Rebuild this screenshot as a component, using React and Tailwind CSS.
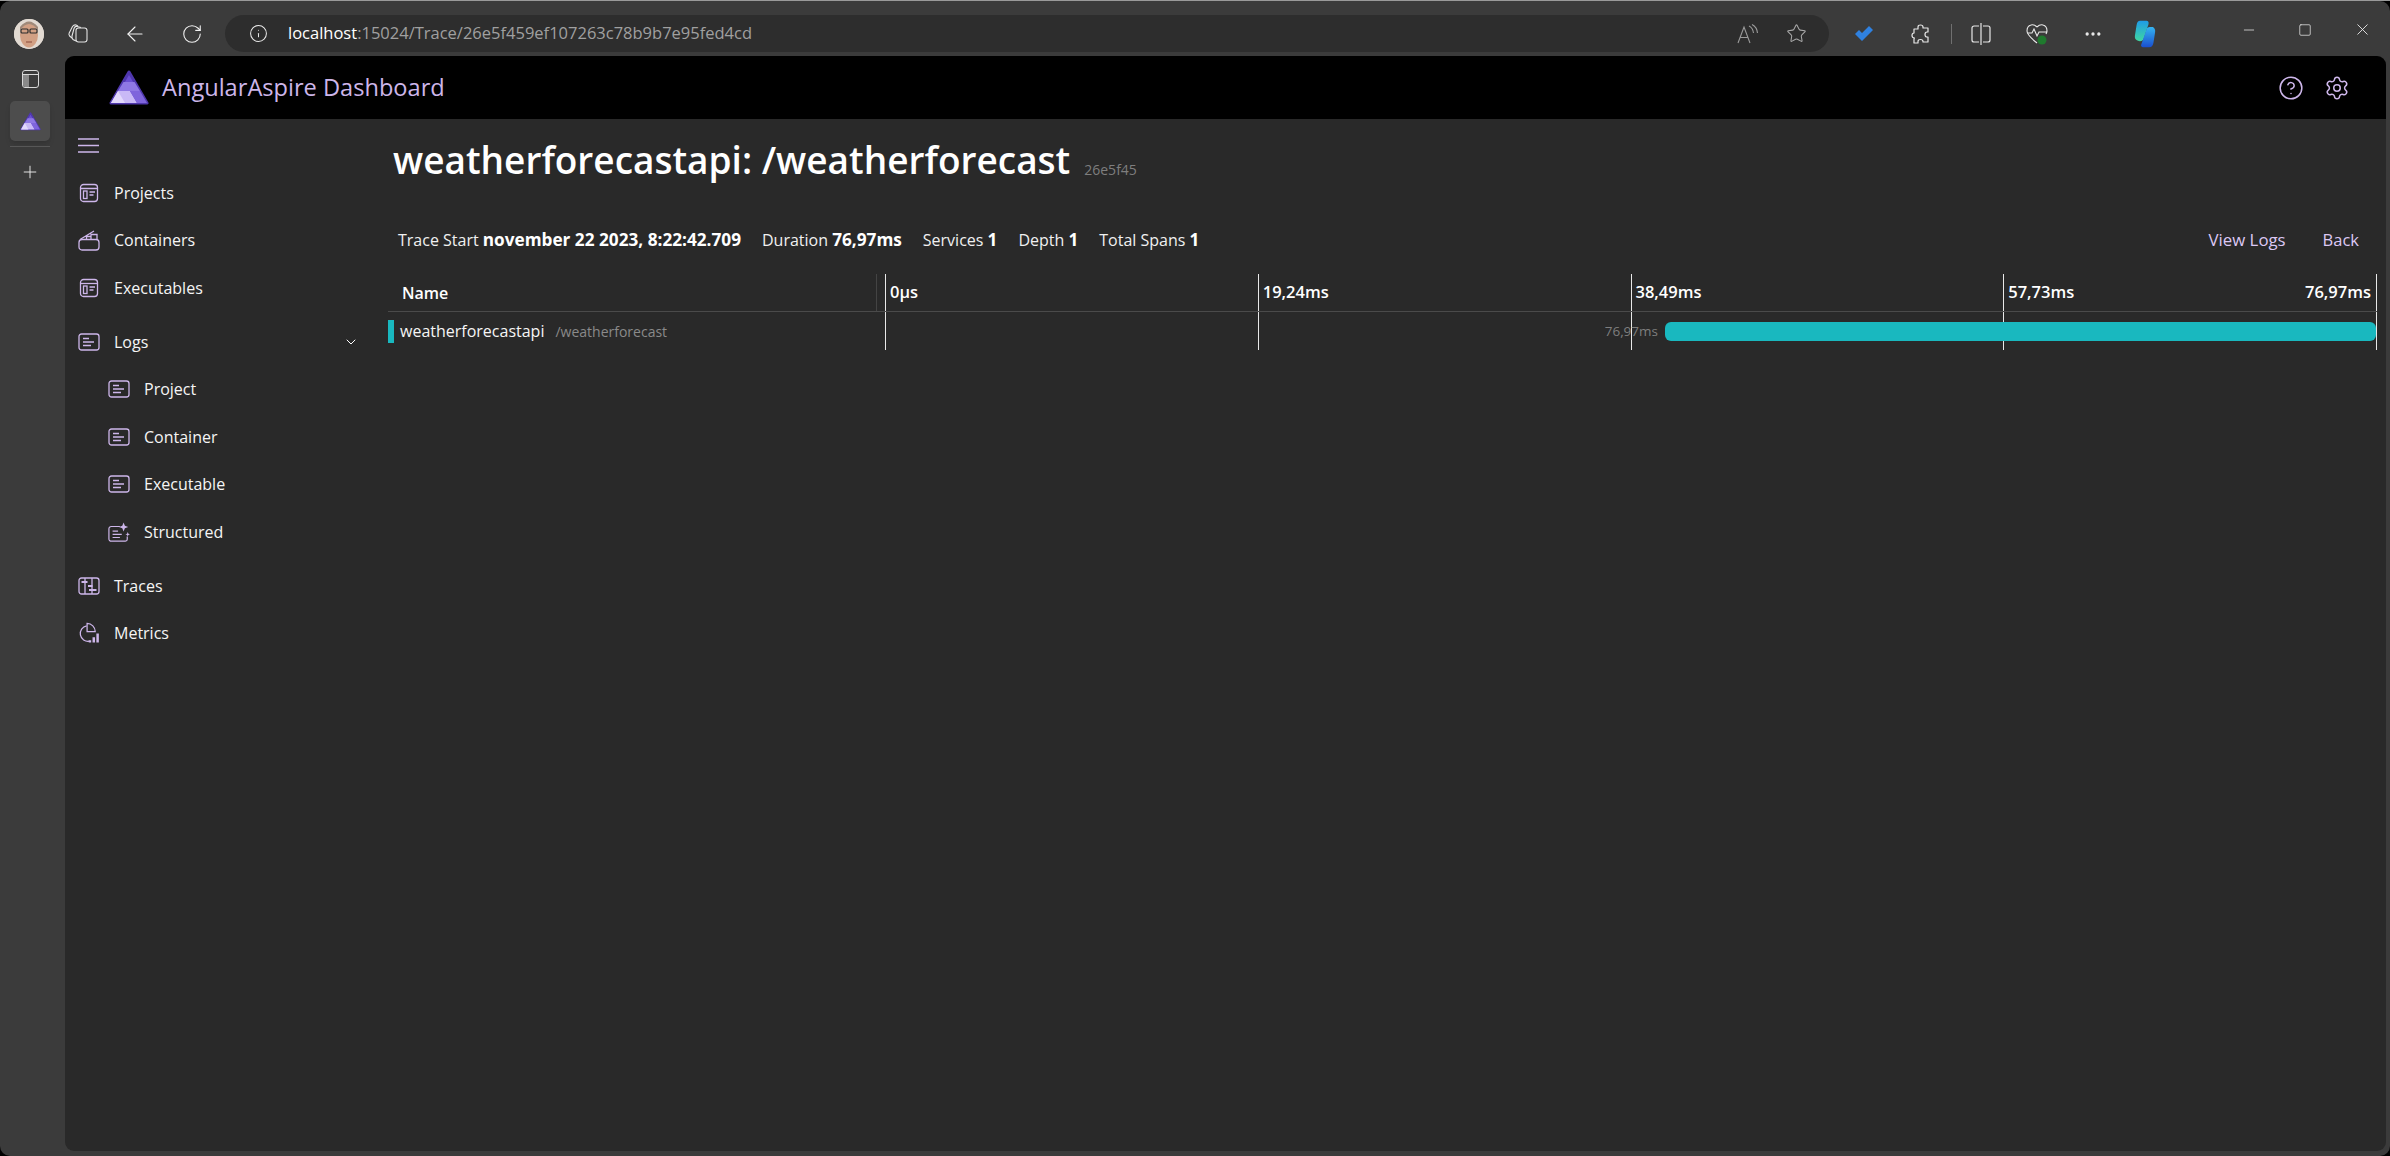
import { ArrowLeft, ChevronDown, CircleHelp, Info, Minus, MoreHorizontal, Plus, RotateCw, Settings, Square, Star, X } from "lucide-react";

const lilac = "#cdb6ea";

function Logo({ className }) {
  return (
    <svg viewBox="0 0 40 36" className={className}>
      <path d="M20 2 L38 33 H2 Z" fill="#6a4fd2" stroke="#4f37ad" strokeWidth="3" strokeLinejoin="round" />
      <path d="M14.5 12 H25.5 L31 21 H9 Z" fill="#8f78e4" />
      <path d="M9 21 H21 L28 33 H2 Z" fill="#c9b9f6" />
      <path d="M9 21 L16 33 H2 Z" fill="#e2d8fc" />
      <path d="M21 21 H31 L38 33 H28 Z" fill="#7f65dc" />
    </svg>
  );
}

function CardIcon() {
  return (
    <svg viewBox="0 0 20 20" className="h-[20px] w-[20px]" fill="none" stroke={lilac} strokeWidth="1.3">
      <rect x="1.5" y="1.5" width="17" height="17" rx="3" />
      <path d="M1.5 5.5 H18.5" />
      <rect x="4.5" y="8" width="3.5" height="7.5" />
      <path d="M10.5 9 H16 M10.5 12 H14.5" />
    </svg>
  );
}

function ContainerIcon() {
  return (
    <svg viewBox="0 0 22 21" className="h-[21px] w-[22px]" fill="none" stroke={lilac} strokeWidth="1.3">
      <rect x="1" y="9.5" width="20" height="10.5" rx="3" />
      <path d="M2 9.5 L16 1 M8.5 9.5 V6.5 H13 V9.5 M13 6 V4.5 H19 V9.5" />
    </svg>
  );
}

function LogIcon() {
  return (
    <svg viewBox="0 0 22 18" className="h-[18px] w-[22px]" fill="none" stroke={lilac} strokeWidth="1.3">
      <rect x="1" y="1" width="20" height="16" rx="2.5" />
      <path d="M5 5.5 H11 M5 9 H16 M5 12.5 H13" />
    </svg>
  );
}

function StructuredIcon() {
  return (
    <svg viewBox="0 0 24 22" className="h-[22px] w-[24px]" fill="none" stroke={lilac} strokeWidth="1.3">
      <path d="M13 5 H3.5 A2.5 2.5 0 0 0 1 7.5 V18.5 A2.5 2.5 0 0 0 3.5 21 H19 A2 2 0 0 0 21 19 V16" />
      <path d="M5 10 H11 M5 13.5 H15 M5 17 H13" />
      <path d="M17 0.5 L18.4 4.1 L22 5.5 L18.4 6.9 L17 10.5 L15.6 6.9 L12 5.5 L15.6 4.1 Z" fill={lilac} stroke="none" />
      <path d="M21.5 11 L22.2 12.8 L24 13.5 L22.2 14.2 L21.5 16 L20.8 14.2 L19 13.5 L20.8 12.8 Z" fill={lilac} stroke="none" />
    </svg>
  );
}

function TraceIcon() {
  return (
    <svg viewBox="0 0 22 18" className="h-[18px] w-[22px]" fill="none" stroke={lilac} strokeWidth="1.3">
      <rect x="1" y="1" width="20" height="16" rx="2.5" />
      <path d="M7 1 V17 M14 1 V17" />
      <path d="M3.5 5 H9.5 M10 9 H14.5 M11 13 H18.5" strokeWidth="2" />
    </svg>
  );
}

function MetricIcon() {
  return (
    <svg viewBox="0 0 23 22" className="h-[22px] w-[23px]" fill="none" stroke={lilac} strokeWidth="1.3">
      <path d="M9 3.5 A8 8 0 1 0 12 19.5" />
      <path d="M9.5 1 A8.5 8.5 0 0 1 18 9.5 H9.5 Z" />
      <path d="M12.5 18.5 V21 M16.5 15.5 V21 M20.5 11.5 V21" strokeWidth="2.6" />
    </svg>
  );
}

function Hamburger() {
  return (
    <svg viewBox="0 0 21 15" className="h-[15px] w-[21px]" stroke={lilac} strokeWidth="1.3">
      <path d="M0 1 H21 M0 7.5 H21 M0 14 H21" />
    </svg>
  );
}

function NavRow({ icon, label, sub, chevron }) {
  return (
    <div className={`flex h-[47.5px] items-center ${sub ? "pl-[43px]" : "pl-[13px]"}`}>
      <div className="flex w-[22px] shrink-0 justify-center">{icon}</div>
      <span className="ml-[14px] text-[16px] text-[#f5f5f5]">{label}</span>
      {chevron && <ChevronDown size={16} strokeWidth={1.5} className="ml-auto mr-[26px] text-white" />}
    </div>
  );
}

function Sidebar() {
  return (
    <nav className="flex w-[320px] shrink-0 flex-col pt-[2px]">
      <div className="flex h-[48px] items-center pl-[13px]">
        <Hamburger />
      </div>
      <NavRow icon={<CardIcon />} label="Projects" />
      <NavRow icon={<ContainerIcon />} label="Containers" />
      <NavRow icon={<CardIcon />} label="Executables" />
      <div className="mt-[6.5px]">
        <NavRow icon={<LogIcon />} label="Logs" chevron />
        <NavRow icon={<LogIcon />} label="Project" sub />
        <NavRow icon={<LogIcon />} label="Container" sub />
        <NavRow icon={<LogIcon />} label="Executable" sub />
        <NavRow icon={<StructuredIcon />} label="Structured" sub />
      </div>
      <div className="mt-[6.5px]">
        <NavRow icon={<TraceIcon />} label="Traces" />
        <NavRow icon={<MetricIcon />} label="Metrics" />
      </div>
    </nav>
  );
}

function Stat({ label, value, className }) {
  return (
    <span className={`text-[16px] text-[#f0f0f0] ${className}`}>
      {label} <b className="text-[17.2px] font-bold text-white">{value}</b>
    </span>
  );
}

const ticks = ["0µs", "19,24ms", "38,49ms", "57,73ms"];

function TraceTable() {
  return (
    <div className="mt-[22px] mr-[9px]">
      <div className="flex h-[38px] border-b border-[#4a4a4a] ml-[3px]">
        <div className="relative flex w-[497px] shrink-0 items-center pl-[14px] text-[16px] font-semibold text-white">
          Name
          <div className="absolute right-[8px] top-0 h-full border-r border-[#444]" />
        </div>
        <div className="grid flex-1 grid-cols-4 border-r border-[#e8e8e8]">
          {ticks.map((t) => (
            <div key={t} className="flex items-center justify-between border-l border-[#e8e8e8] px-[4px] text-[16.5px] font-semibold text-white">
              <span>{t}</span>
              {t === "57,73ms" && <span className="pr-[1px]">76,97ms</span>}
            </div>
          ))}
        </div>
      </div>
      <div className="flex h-[38px] ml-[3px]">
        <div className="flex w-[497px] shrink-0 items-center">
          <div className="h-[23px] w-[6px] bg-[#19b8bf]" />
          <span className="ml-[6px] text-[16px] text-[#f5f5f5]">weatherforecastapi</span>
          <span className="ml-[11px] text-[14px] text-[#8a8a8a]">/weatherforecast</span>
        </div>
        <div className="relative grid flex-1 grid-cols-4 border-r border-[#e8e8e8]">
          {ticks.map((t) => (
            <div key={t} className="border-l border-[#e8e8e8]" />
          ))}
          <div className="absolute inset-y-0 right-0 flex items-center gap-[7px]">
            <span className="text-[13.5px] text-[#7e7e7e]">76,97ms</span>
            <div className="h-[19px] w-[711px] rounded-[6px] bg-[#19b8bf]" />
          </div>
        </div>
      </div>
    </div>
  );
}

function TraceDetail() {
  return (
    <main className="flex min-w-0 flex-1 flex-col pt-[14px]">
      <div className="flex h-[54px] items-center pl-[8px]">
        <h1 className="text-[37px] font-semibold text-white">weatherforecastapi: /weatherforecast</h1>
        <span className="ml-[14px] mt-[18px] text-[14px] text-[#7e7e7e]">26e5f45</span>
      </div>
      <div className="mt-[41px] flex h-[24px] items-center pl-[13px] pr-[27px]">
        <Stat label="Trace Start" value="november 22 2023, 8:22:42.709" />
        <Stat label="Duration" value="76,97ms" className="ml-[21px]" />
        <Stat label="Services" value="1" className="ml-[21px]" />
        <Stat label="Depth" value="1" className="ml-[21px]" />
        <Stat label="Total Spans" value="1" className="ml-[21px]" />
        <span className="ml-auto text-[16.8px] text-[#dcc8f4]">View Logs</span>
        <span className="ml-[37px] text-[16.5px] text-[#dcc8f4]">Back</span>
      </div>
      <TraceTable />
    </main>
  );
}

function Avatar() {
  return (
    <div className="flex h-[30px] w-[30px] items-center justify-center overflow-hidden rounded-full bg-[#d9d2cc]">
      <svg viewBox="0 0 30 30" className="h-full w-full">
        <rect width="30" height="30" fill="#e2dad2" />
        <ellipse cx="15" cy="16" rx="9" ry="12.5" fill="#d2a084" />
        <path d="M6 11 Q15 -1 24 11 L24 8 Q15 -3 6 8 Z" fill="#a08a7a" />
        <rect x="7" y="10" width="7" height="4" rx="1" fill="none" stroke="#2c2c2c" strokeWidth="1.2" />
        <rect x="16" y="10" width="7" height="4" rx="1" fill="none" stroke="#2c2c2c" strokeWidth="1.2" />
        <path d="M12 23 H18" stroke="#8a4a3a" strokeWidth="1" />
      </svg>
    </div>
  );
}

function Workspaces() {
  return (
    <svg viewBox="0 0 22 22" className="h-[22px] w-[22px]" fill="none" stroke="#e4e4e4" strokeWidth="1.1">
      <rect x="9" y="5" width="11" height="14" rx="2.5" />
      <path d="M9 18 L6 16.5 Q4.5 15 5 13 L7 5.5 Q8 3 10 3.5 L14 4.5" />
      <path d="M5 15 L2.6 13 Q1.5 11.5 2.2 10 L5.5 3.5 Q7 1.5 9 2 L11 3" />
    </svg>
  );
}

function ReadAloud() {
  return (
    <svg viewBox="0 0 22 20" className="h-[20px] w-[22px]" fill="none" stroke="#9a9a9a" strokeWidth="1.1">
      <path d="M1 19 L7 3 L13 19 M3.2 13.5 H10.8" />
      <path d="M12 2 Q16 4 16.5 9 M15 0.5 Q20 3 20.5 9" />
    </svg>
  );
}

function Todo() {
  return (
    <svg viewBox="0 0 20 18" className="h-[18px] w-[20px]">
      <path d="M1 9 L5 5 L8 8 L15 1 L19 5 L8 16 Z" fill="#2f81e0" />
    </svg>
  );
}

function Extensions() {
  return (
    <svg viewBox="0 0 20 20" className="h-[20px] w-[20px]" fill="none" stroke="#e8e8e8" strokeWidth="1.2" strokeLinejoin="round">
      <path d="M7 3 Q7 1 9.5 1 Q12 1 12 3 V4 H17 V8 H16 Q14 8 14 10.5 Q14 13 16 13 H17 V18 H12 V17.5 Q12 15.5 9.5 15.5 Q7 15.5 7 17.5 V19 H3 V14 H3.5 Q1 14 1 11.5 Q1 9 3 9 V5 H7 Z" />
    </svg>
  );
}

function SplitScreen() {
  return (
    <svg viewBox="0 0 20 22" className="h-[22px] w-[20px]" fill="none" stroke="#e8e8e8" strokeWidth="1.2">
      <path d="M8 3 H3 A2 2 0 0 0 1 5 V17 A2 2 0 0 0 3 19 H8 M12 3 H17 A2 2 0 0 1 19 5 V17 A2 2 0 0 1 17 19 H12" />
      <path d="M10 0 V22" />
    </svg>
  );
}

function Health() {
  return (
    <svg viewBox="0 0 22 22" className="h-[22px] w-[22px]" fill="none" stroke="#e8e8e8" strokeWidth="1.1">
      <path d="M11 4 Q8 1 5 2 Q1 3 1 8 Q1 12 11 20" />
      <path d="M11 4 Q14 1 17 2 Q21 3 21 8 Q21 9 20 11" />
      <path d="M1.5 10 H6 L8 6 L11 13 L13 9 H21" />
      <circle cx="16" cy="17" r="4.5" fill="#1f7a2e" stroke="none" />
    </svg>
  );
}

function Copilot() {
  return (
    <svg viewBox="0 0 30 40" className="h-[28px] w-[30px]">
      <defs>
        <linearGradient id="copA" x1="0" y1="0" x2="0" y2="1">
          <stop offset="0" stopColor="#1f9be8" />
          <stop offset="1" stopColor="#3fd6a0" />
        </linearGradient>
        <linearGradient id="copB" x1="0" y1="0" x2="0" y2="1">
          <stop offset="0" stopColor="#35b4f0" />
          <stop offset="1" stopColor="#1a4fd0" />
        </linearGradient>
      </defs>
      <path d="M8 1 H17 Q21 1 20 6 L13 27 Q11 31 6 30 Q0 29 0.5 23 L3 7 Q4 1 8 1 Z" fill="url(#copA)" />
      <path d="M22 10 H26 Q30 12 29.5 17 L27 33 Q26 39 21 39 H12 Q8 38 10 34 L17 14 Q18 10 22 10 Z" fill="url(#copB)" />
    </svg>
  );
}

function AddressBar() {
  return (
    <div className="ml-[22px] flex h-[37px] w-[1604px] shrink-0 items-center rounded-full bg-[#2d2d2d] pl-[24px] pr-[22px]">
      <Info size={19} strokeWidth={1.3} className="text-[#e8e8e8]" />
      <span className="ml-[20px] text-[16.5px] text-white">
        localhost<span className="text-[#a0a0a0]">:15024/Trace/26e5f459ef107263c78b9b7e95fed4cd</span>
      </span>
      <div className="ml-auto flex items-center gap-[27px]">
        <ReadAloud />
        <Star size={21} strokeWidth={1.2} className="text-[#a8a8a8]" />
      </div>
    </div>
  );
}

function BrowserBar() {
  return (
    <header className="flex h-[55px] shrink-0 items-center pl-[14px] pt-[10px]">
      <Avatar />
      <div className="ml-[23px] flex items-center gap-[34px]">
        <Workspaces />
        <ArrowLeft size={24} strokeWidth={1.1} className="text-[#f0f0f0]" />
        <RotateCw size={22} strokeWidth={1.2} className="text-[#f0f0f0]" />
      </div>
      <AddressBar />
      <div className="ml-[25px] flex w-[20px] justify-center"><Todo /></div>
      <div className="ml-[37px] flex items-center"><Extensions /></div>
      <div className="ml-[20px] h-[20px] border-l border-[#707070]" />
      <div className="ml-[19px] flex items-center"><SplitScreen /></div>
      <div className="ml-[35px] flex items-center"><Health /></div>
      <MoreHorizontal size={20} strokeWidth={2} className="ml-[35px] text-[#e8e8e8]" />
      <div className="ml-[27px] flex items-center"><Copilot /></div>
      <div className="ml-[81px] flex -translate-y-[4px] items-center gap-[41px]">
        <Minus size={16} strokeWidth={1.1} className="text-[#f0f0f0]" />
        <Square size={14} strokeWidth={1.2} className="text-[#f0f0f0]" />
        <X size={19} strokeWidth={1.1} className="text-[#f0f0f0]" />
      </div>
    </header>
  );
}

function TabRail() {
  return (
    <aside className="flex w-[65px] shrink-0 flex-col items-center pr-[5px]">
      <div className="mt-[14px] flex h-[18px] w-[17px] flex-col overflow-hidden rounded-[3px] border border-[#d8d8d8]">
        <div className="h-[4px] border-b border-[#d8d8d8]" />
        <div className="flex flex-1">
          <div className="w-[6px] bg-[#8a8a8a]" />
        </div>
      </div>
      <div className="mt-[13px] flex h-[40px] w-[40px] items-center justify-center rounded-[5px] bg-[#4d4d4d] shadow-md">
        <Logo className="h-[19px] w-[21px]" />
      </div>
      <div className="mt-[5px] w-[40px] border-b border-[#575757]" />
      <Plus size={20} strokeWidth={1.1} className="mt-[15px] text-[#f0f0f0]" />
    </aside>
  );
}

function AppHeader() {
  return (
    <div className="flex h-[63px] shrink-0 items-center bg-black pl-[44px] pr-[36px]">
      <Logo className="h-[36px] w-[40px]" />
      <span className="ml-[13px] text-[23.6px] text-[#cdb6ea]">AngularAspire Dashboard</span>
      <div className="ml-auto flex items-center gap-[20px]">
        <CircleHelp size={26} strokeWidth={1.4} color={lilac} />
        <Settings size={26} strokeWidth={1.4} color={lilac} />
      </div>
    </div>
  );
}

export default function App() {
  return (
    <div className="h-screen w-full overflow-hidden border-t border-[#9a9a9a] bg-black font-['Open_Sans',sans-serif]">
      <div className="flex h-full flex-col overflow-hidden rounded-[10px] bg-[#3b3b3b]">
        <BrowserBar />
        <div className="flex min-h-0 flex-1 pb-[5px] pr-[4px]">
          <TabRail />
          <div className="flex min-w-0 flex-1 flex-col overflow-hidden rounded-[9px] bg-[#292929]">
            <AppHeader />
            <div className="flex min-h-0 flex-1">
              <Sidebar />
              <TraceDetail />
            </div>
          </div>
        </div>
      </div>
    </div>
  );
}
